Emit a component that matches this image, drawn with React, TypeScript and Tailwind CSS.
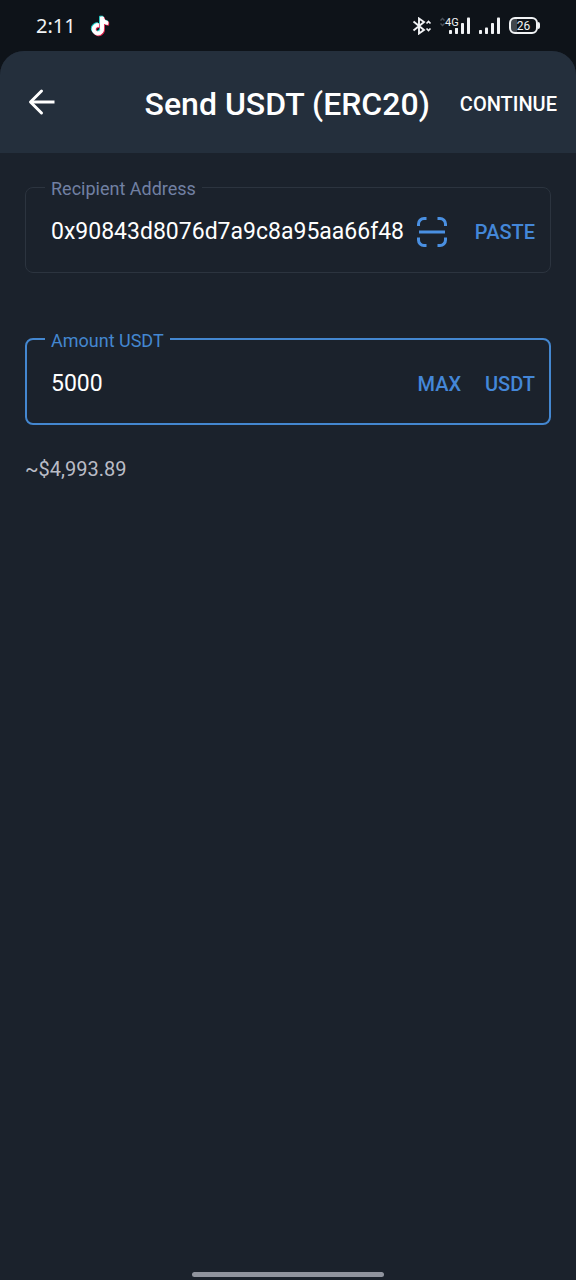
import { useState } from "react";
import type { ReactNode } from "react";

const NOTE =
  "M16.6 5.82A4.28 4.28 0 0 1 15.54 3h-3.09v12.4a2.59 2.59 0 0 1-2.59 2.5 2.6 2.6 0 0 1-2.59-2.6c0-1.72 1.66-3.01 3.37-2.48V9.66C7.19 9.2 4.17 11.88 4.17 15.3c0 3.33 2.76 5.7 5.69 5.7 3.14 0 5.69-2.55 5.69-5.7V9.01a7.35 7.35 0 0 0 4.3 1.38V7.3s-1.88.09-3.25-1.48z";

function TikTokIcon() {
  return (
    <svg viewBox="2 1 20 22" className="h-[22px] w-5" strokeWidth="1" strokeLinejoin="round" aria-hidden="true">
      <path d={NOTE} fill="#25d9d2" stroke="#25d9d2" transform="translate(-.8 -.8)" />
      <path d={NOTE} fill="#f32b56" stroke="#f32b56" transform="translate(.8 .8)" />
      <path d={NOTE} fill="#fff" stroke="#fff" />
    </svg>
  );
}

function BluetoothIcon() {
  return (
    <svg viewBox="0 0 20 18" className="h-[18px] w-5" fill="none" stroke="#f1f3f5" strokeWidth="1.9" aria-hidden="true">
      <path d="M1.5 4.5 12 13 7 16.5V1.5L12 5 1.5 13.5" />
      <path d="m14.5 6.5 2-2 2 2M14.5 11.5l2 2 2-2" strokeWidth="1.7" />
    </svg>
  );
}

function SignalIcon() {
  return (
    <svg viewBox="0 0 22 18" className="h-[18px] w-[22px]" fill="#f1f3f5" aria-hidden="true">
      <rect x="0" y="13" width="3" height="4" rx=".8" />
      <rect x="6" y="10.5" width="3" height="6.5" rx=".8" />
      <rect x="12" y="6" width="3" height="11" rx=".8" />
      <rect x="18" y="0.5" width="3" height="16.5" rx=".8" />
    </svg>
  );
}

function MobileDataIcon() {
  return (
    <span className="relative flex items-end gap-1">
      <svg viewBox="0 0 5 10" className="mb-2 h-[10px] w-[5px]" fill="none" stroke="#4a5058" strokeWidth="1.4" aria-hidden="true">
        <path d="m.5 3.5 2-2 2 2M.5 6.5l2 2 2-2" />
      </svg>
      <SignalIcon />
      <span className="absolute top-0 left-[5px] bg-[#0e1319] font-['Roboto',sans-serif] text-[11px] leading-[11px]">
        4G
      </span>
    </span>
  );
}

function BatteryIcon() {
  return (
    <span className="flex items-center">
      <span className="flex h-[17px] w-[29px] items-center justify-center rounded-md border-2 border-[#f1f3f5] bg-[linear-gradient(to_right,#41464c_26%,transparent_26%)] font-['Roboto',sans-serif] text-[12px] leading-none">
        26
      </span>
      <span className="h-[7px] w-[2px] rounded-r-sm bg-[#f1f3f5]" />
    </span>
  );
}

function BackIcon() {
  return (
    <svg viewBox="0 0 28 28" className="size-7" fill="none" stroke="#fff" strokeWidth="3" strokeLinecap="round" strokeLinejoin="round" aria-hidden="true">
      <path d="M13.5 3 2.5 14l11 11" />
      <path d="M3 14h23.5" strokeLinecap="butt" />
    </svg>
  );
}

function ScanIcon() {
  return (
    <svg viewBox="0 0 30 30" className="size-[30px]" fill="none" stroke="#4a90e2" strokeWidth="3" aria-hidden="true">
      <path d="M1.5 9V7A5.5 5.5 0 0 1 7 1.5h2.5M20.5 1.5H23A5.5 5.5 0 0 1 28.5 7v2M28.5 20.5V23a5.5 5.5 0 0 1-5.5 5.5h-2.5M9.5 28.5H7A5.5 5.5 0 0 1 1.5 23v-2.5" />
      <path d="M2 15h26" />
    </svg>
  );
}

function Field({
  id,
  label,
  value,
  onChange,
  active = false,
  children,
}: {
  id: string;
  label: string;
  value: string;
  onChange: (value: string) => void;
  active?: boolean;
  children: ReactNode;
}) {
  return (
    <fieldset
      className={`min-w-0 rounded-lg ${active ? "border-2 border-[#4487d0]" : "border border-[#2c343f] px-px pb-px"}`}
    >
      <legend className={`ml-[18px] px-1.5 pt-1 text-lg leading-5 ${active ? "text-[#4487d0]" : "text-[#7180a3]"}`}>
        <label htmlFor={id}>{label}</label>
      </legend>
      <div className="flex h-[72px] items-center pr-[14px] pb-1.5 pl-6">
        <input
          id={id}
          value={value}
          onChange={(event) => onChange(event.target.value)}
          className="min-w-0 flex-1 bg-transparent text-[23px] leading-8 text-white outline-none"
        />
        {children}
      </div>
    </fieldset>
  );
}

const actionClass = "text-xl leading-8 font-medium text-[#4487d8]";

export default function App() {
  const [address, setAddress] = useState("0x90843d8076d7a9c8a95aa66f48");
  const [amount, setAmount] = useState("5000");

  return (
    <div className="flex min-h-screen flex-col bg-[#0e1319] font-['Roboto',sans-serif] text-white">
      <div className="flex h-[51px] items-center justify-between px-9 font-['Noto_Sans',sans-serif] text-[#f1f3f5]">
        <div className="flex items-center gap-[14px]">
          <span className="text-[20px] leading-none">2:11</span>
          <TikTokIcon />
        </div>
        <div className="flex items-center gap-2">
          <BluetoothIcon />
          <MobileDataIcon />
          <SignalIcon />
          <BatteryIcon />
        </div>
      </div>

      <div className="flex flex-1 flex-col overflow-hidden rounded-t-3xl bg-[#1b222c]">
        <header className="flex h-[102px] items-center justify-between bg-[#242f3c] pr-[19px] pl-7">
          <button type="button" aria-label="Back">
            <BackIcon />
          </button>
          <div className="flex items-center gap-[30px] pt-1">
            <h1 className="text-[32px] leading-10 font-medium">Send USDT (ERC20)</h1>
            <button type="button" className="text-xl leading-8 font-medium">
              CONTINUE
            </button>
          </div>
        </header>

        <main className="flex flex-1 flex-col px-[25px] pt-[22px]">
          <form className="flex flex-col gap-[54px]" onSubmit={(event) => event.preventDefault()}>
            <Field id="recipient" label="Recipient Address" value={address} onChange={setAddress}>
              <button type="button" aria-label="Scan QR code" className="ml-3">
                <ScanIcon />
              </button>
              <button type="button" className={`ml-7 ${actionClass}`}>
                PASTE
              </button>
            </Field>
            <Field id="amount" label="Amount USDT" value={amount} onChange={setAmount} active>
              <button type="button" className={actionClass}>
                MAX
              </button>
              <button type="button" className={`ml-6 ${actionClass}`}>
                USDT
              </button>
            </Field>
          </form>
          <p className="mt-[30px] text-xl leading-7 text-[#b9bcc6]">~$4,993.89</p>
        </main>

        <div className="mx-auto mb-[3px] h-[5px] w-1/3 rounded-full bg-[#90949e]" />
      </div>
    </div>
  );
}
